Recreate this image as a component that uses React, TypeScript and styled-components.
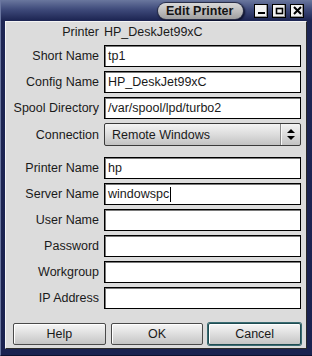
import React from "react";
import styled, { createGlobalStyle } from "styled-components";

const Global = createGlobalStyle`
  html, body { margin: 0; padding: 0; background: #1b2350; }
  body { font-family: "Liberation Sans", Arial, sans-serif; }
`;

const Window = styled.div`
  width: 312px;
  height: 356px;
  box-sizing: border-box;
  display: flex;
  flex-direction: column;
  background: linear-gradient(180deg, #6a779e 0px, #404c7c 9px, #1e2654 20px, #1a2250 100%);
  border-left: 1px solid #6a76a0;
  border-bottom: 1px solid #0c1230;
`;

const TitleBar = styled.div`
  height: 21px;
  flex: none;
  display: flex;
  align-items: center;
  justify-content: flex-end;
  padding-right: 8px;
  gap: 4px;
`;

const TitlePill = styled.div`
  width: 85px;
  height: 16px;
  box-sizing: border-box;
  margin-right: 7px;
  padding-left: 8px;
  display: flex;
  align-items: center;
  border-radius: 8px;
  background: linear-gradient(180deg, #d8d8d8 0%, #b8b8b8 60%, #9e9e9e 100%);
  box-shadow: 0 0 0 1px #2a2f48, 1px 1px 2px 1px #0a0e28;
  font-weight: bold;
  font-size: 12.5px;
  color: #141414;
  white-space: nowrap;
`;

const WinButton = styled.div`
  width: 12px;
  height: 12px;
  background: #f2f2f2;
  border: 1px solid #000;
  box-shadow: inset -1px -1px 0 #9a9a9a;
  display: flex;
  align-items: center;
  justify-content: center;
`;

const Panel = styled.div`
  flex: 1;
  margin: 0 5px 6px 4px;
  background: #dcdcdc;
  border-right: 1px solid #2a2a2a;
  border-bottom: 1px solid #2a2a2a;
  border-top: 1px solid #f4f4f4;
  border-left: 1px solid #f4f4f4;
  display: flex;
  flex-direction: column;
`;

const Form = styled.div`
  display: grid;
  grid-template-columns: 88px 197px;
  column-gap: 5px;
  row-gap: 4px;
  padding: 1px 0 0 5px;
  font-size: 12.5px;
  color: #1a1a1a;
`;

const Label = styled.div`
  display: flex;
  align-items: center;
  justify-content: flex-end;
  white-space: nowrap;
`;

const Value = styled.div<{ $h?: number }>`
  height: ${(p) => p.$h ?? 18}px;
  display: flex;
  align-items: center;
`;

const Input = styled.div`
  height: 22px;
  box-sizing: border-box;
  background: #fff;
  border: 1px solid #000;
  box-shadow: inset 1px 1px 0 #7a7a7a;
  padding-left: 3px;
  display: flex;
  align-items: center;
  white-space: nowrap;
`;

const Caret = styled.span`
  display: inline-block;
  width: 1px;
  height: 15px;
  background: #000;
  margin-left: 1px;
`;

const Select = styled.div`
  height: 23px;
  box-sizing: border-box;
  border: 1px solid #3a3a3a;
  border-radius: 2px;
  background: linear-gradient(180deg, #f4f4f4 0%, #dadada 55%, #c2c2c2 100%);
  display: flex;
  align-items: center;
`;

const SelectText = styled.div`
  flex: 1;
  padding-left: 7px;
`;

const SelectArrow = styled.div`
  width: 19px;
  height: 100%;
  border-left: 1px solid #8a8a8a;
  box-shadow: inset 1px 0 0 #f8f8f8;
  display: flex;
  align-items: center;
  justify-content: center;
`;

const Spacer = styled.div`
  grid-column: 1 / span 2;
  height: 3px;
`;

const ButtonRow = styled.div`
  display: grid;
  grid-template-columns: repeat(3, 1fr);
  gap: 5px;
  padding: 0 5px 0 7px;
  margin-top: 14px;
`;

const Button = styled.div<{ $focus?: boolean }>`
  height: 22px;
  box-sizing: border-box;
  border: 1px solid ${(p) => (p.$focus ? "#1f4c52" : "#4a4a4a")};
  box-shadow: ${(p) => (p.$focus ? "0 0 0 1px #3a6c72, inset 1px 1px 0 #fff" : "inset 1px 1px 0 #fff")};
  border-radius: 2px;
  background: linear-gradient(180deg, #f6f6f6 0%, #dedede 50%, #c4c4c4 100%);
  display: flex;
  align-items: center;
  justify-content: center;
  font-size: 12.5px;
  color: #1a1a1a;
`;

const rows: { label: string; value: string; caret?: boolean }[] = [
  { label: "Short Name", value: "tp1" },
  { label: "Config Name", value: "HP_DeskJet99xC" },
  { label: "Spool Directory", value: "/var/spool/lpd/turbo2" },
];

const rows2: { label: string; value: string; caret?: boolean }[] = [
  { label: "Printer Name", value: "hp" },
  { label: "Server Name", value: "windowspc", caret: true },
  { label: "User Name", value: "" },
  { label: "Password", value: "" },
  { label: "Workgroup", value: "" },
  { label: "IP Address", value: "" },
];

export default function App() {
  return (
    <>
      <Global />
      <Window>
        <TitleBar>
          <TitlePill>Edit Printer</TitlePill>
          <WinButton>
            <svg width="9" height="9" viewBox="0 0 9 9">
              <rect x="1" y="6" width="7" height="2" fill="#000" />
            </svg>
          </WinButton>
          <WinButton>
            <svg width="9" height="9" viewBox="0 0 9 9">
              <rect x="1.5" y="2.5" width="6" height="5" fill="none" stroke="#000" strokeWidth="1.6" />
            </svg>
          </WinButton>
          <WinButton>
            <svg width="9" height="9" viewBox="0 0 9 9">
              <path d="M1 1 L8 8 M8 1 L1 8" stroke="#000" strokeWidth="2" />
            </svg>
          </WinButton>
        </TitleBar>
        <Panel>
          <Form>
            <Label>Printer</Label>
            <Value>HP_DeskJet99xC</Value>
            {rows.map((r) => (
              <React.Fragment key={r.label}>
                <Label>{r.label}</Label>
                <Input>{r.value}</Input>
              </React.Fragment>
            ))}
            <Label>Connection</Label>
            <Select>
              <SelectText>Remote Windows</SelectText>
              <SelectArrow>
                <svg width="8" height="11" viewBox="0 0 8 11">
                  <path d="M4 0 L8 4 L0 4 Z M0 7 L8 7 L4 11 Z" fill="#000" />
                </svg>
              </SelectArrow>
            </Select>
            <Spacer />
            {rows2.map((r) => (
              <React.Fragment key={r.label}>
                <Label>{r.label}</Label>
                <Input>
                  {r.value}
                  {r.caret && <Caret />}
                </Input>
              </React.Fragment>
            ))}
          </Form>
          <ButtonRow>
            <Button>Help</Button>
            <Button>OK</Button>
            <Button $focus>Cancel</Button>
          </ButtonRow>
        </Panel>
      </Window>
    </>
  );
}
